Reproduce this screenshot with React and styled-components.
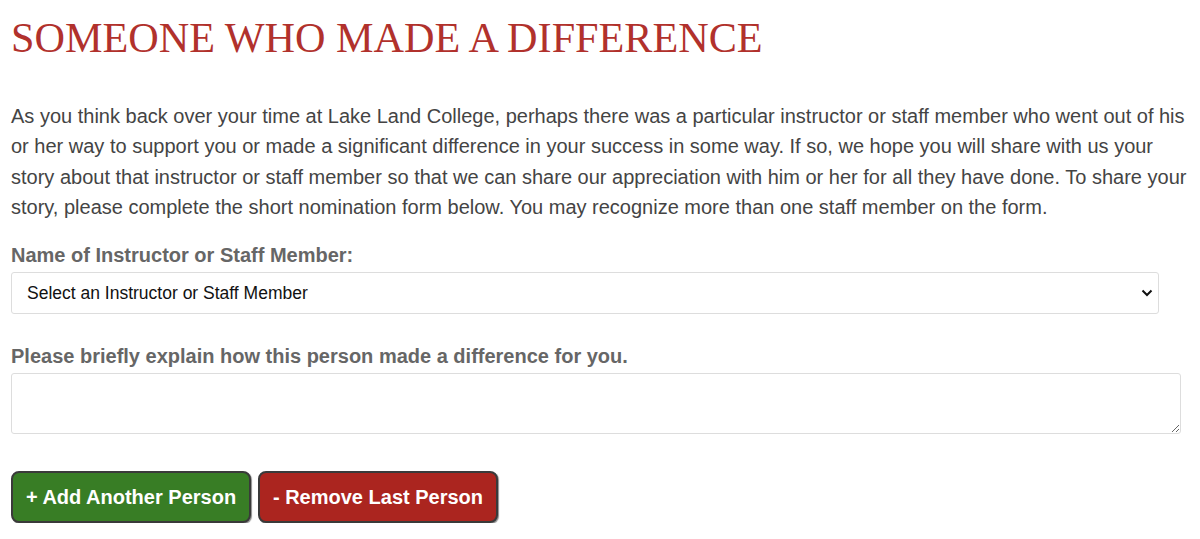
import React from "react";
import styled, { createGlobalStyle } from "styled-components";

const Global = createGlobalStyle`
  html, body { margin: 0; padding: 0; background: #fff; }
  body { font-family: "Liberation Sans", Arial, sans-serif; }
`;

const Page = styled.main`
  padding: 14px 6px 0 11px;
  display: flex;
  flex-direction: column;
`;

const Title = styled.h1`
  margin: 0;
  font-family: "Liberation Serif", "Times New Roman", serif;
  font-weight: 400;
  font-size: 42.2px;
  line-height: 48px;
  color: #b1312c;
`;

const Intro = styled.p`
  margin: 39px 0 0;
  font-size: 20px;
  line-height: 30.3px;
  color: #444;
`;

const Field = styled.div`
  display: flex;
  flex-direction: column;
  gap: 5px;
  margin-top: ${(p) => p.$top}px;
`;

const Label = styled.label`
  font-size: 20px;
  font-weight: 700;
  color: #666;
  line-height: 23px;
`;

const SelectBox = styled.div`
  position: relative;
  width: ${(p) => p.$width}px;
`;

const Select = styled.select`
  appearance: none;
  width: 100%;
  height: 42px;
  box-sizing: border-box;
  border: 1px solid #ddd;
  border-radius: 3px;
  background: #fff;
  padding: 0 15px;
  font-family: "Liberation Sans", Arial, sans-serif;
  font-size: 17.5px;
  color: #111;
`;

const Chevron = styled.svg`
  position: absolute;
  right: 6px;
  top: 17px;
  pointer-events: none;
`;

const TextArea = styled.textarea`
  width: 1170px;
  height: 61px;
  box-sizing: border-box;
  border: 1px solid #ddd;
  border-radius: 3px;
  font-family: "Liberation Sans", Arial, sans-serif;
  font-size: 16px;
  padding: 8px 12px;
  resize: vertical;
`;

const Buttons = styled.div`
  display: flex;
  gap: 7px;
  margin-top: 37px;
`;

const Button = styled.button`
  width: 240px;
  height: 52px;
  box-sizing: border-box;
  border: 2px solid #3a3a3a;
  border-radius: 8px;
  background: ${(p) => p.$bg};
  color: #fff;
  font-family: "Liberation Sans", Arial, sans-serif;
  font-weight: 700;
  font-size: 20px;
  padding: 0;
  cursor: pointer;
  box-shadow: 1px 1px 1px rgba(0,0,0,0.45);
`;

export default function App() {
  return (
    <>
      <Global />
      <Page>
        <Title>SOMEONE WHO MADE A DIFFERENCE</Title>
        <Intro>
          As you think back over your time at Lake Land College, perhaps there was a particular instructor or staff member who went out of his or her way to support you or made a significant difference in your success in some way. If so, we hope you will share with us your story about that instructor or staff member so that we can share our appreciation with him or her for all they have done. To share your story, please complete the short nomination form below. You may recognize more than one staff member on the form.
        </Intro>
        <Field $top={22}>
          <Label htmlFor="person">Name of Instructor or Staff Member:</Label>
          <SelectBox $width={1148}>
            <Select id="person" defaultValue="">
              <option value="">Select an Instructor or Staff Member</option>
            </Select>
            <Chevron width="12" height="8" viewBox="0 0 12 8">
              <path d="M1.5 1.5 L6 6 L10.5 1.5" fill="none" stroke="#111" strokeWidth="2" />
            </Chevron>
          </SelectBox>
        </Field>
        <Field $top={31}>
          <Label htmlFor="story">Please briefly explain how this person made a difference for you.</Label>
          <TextArea id="story" />
        </Field>
        <Buttons>
          <Button $bg="#387d25">+ Add Another Person</Button>
          <Button $bg="#ab251f">- Remove Last Person</Button>
        </Buttons>
      </Page>
    </>
  );
}
